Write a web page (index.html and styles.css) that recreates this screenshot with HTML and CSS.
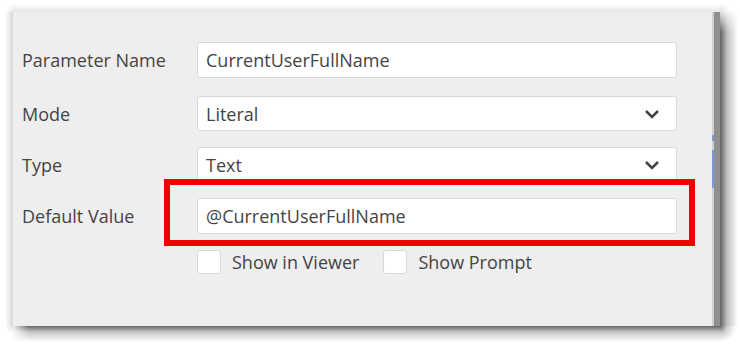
FILE: index.html
```html
<!DOCTYPE html>
<html lang="en">
<head>
    <meta charset="UTF-8">
    <meta name="viewport" content="width=device-width, initial-scale=1.0">
    <title>Parameter</title>
    <link rel="stylesheet" href="styles.css">
</head>
<body>
    <div id="frame">
        <div class="sh tl"></div>
        <div class="sh top"></div>
        <div class="sh tr"></div>
        <div class="sh left"></div>

        <div id="dialog">
            <div id="form">
                <div class="row first">
                    <label class="label">Parameter Name</label>
                    <div class="field">CurrentUserFullName</div>
                </div>
                <div class="row">
                    <label class="label">Mode</label>
                    <div class="field select">
                        <span>Literal</span>
                        <svg class="chevron" width="16" height="10" viewBox="0 0 16 10"><path d="M2 2 L8 8 L14 2" fill="none" stroke="#444" stroke-width="2.6"/></svg>
                    </div>
                </div>
                <div class="row">
                    <label class="label">Type</label>
                    <div class="field select">
                        <span>Text</span>
                        <svg class="chevron" width="16" height="10" viewBox="0 0 16 10"><path d="M2 2 L8 8 L14 2" fill="none" stroke="#444" stroke-width="2.6"/></svg>
                    </div>
                </div>
                <div class="row">
                    <label class="label">Default Value</label>
                    <div class="field-wrap">
                        <div class="field">@CurrentUserFullName</div>
                        <div class="highlight"></div>
                    </div>
                </div>
                <div class="checks">
                    <div class="check"><span class="box"></span>Show in Viewer</div>
                    <div class="check"><span class="box"></span>Show Prompt</div>
                </div>
            </div>
            <div id="edge">
                <span class="blue small"></span>
                <span class="blue"></span>
            </div>
        </div>

        <div class="sh right"></div>
        <div class="sh bl"></div>
        <div class="sh bottom"></div>
        <div class="sh br"></div>
    </div>
</body>
</html>
```

FILE: styles.css
```css
/* dialog screenshot */
body {
    margin: 0;
    background-color: white;
    font-family: "Open Sans", "Noto Sans", sans-serif;
    color: #444;
}

/* shadow drawn as gradient cells round the dialog */
#frame {
    display: grid;
    grid-template-columns: 8px 707px 18px;
    grid-template-rows: 8px 314px 16px;
    margin: 4px 0 0 5px;
}

.top {
    background: linear-gradient(to top, rgba(0, 0, 0, 0.10), rgba(0, 0, 0, 0));
}

.left {
    background: linear-gradient(to left, rgba(0, 0, 0, 0.16), rgba(0, 0, 0, 0));
}

.tl {
    background: radial-gradient(circle at bottom right, rgba(0, 0, 0, 0.08), rgba(0, 0, 0, 0) 8px);
}

.tr {
    background: radial-gradient(circle at bottom left, rgba(0, 0, 0, 0.12), rgba(0, 0, 0, 0) 10px);
}

.right {
    background:
        linear-gradient(to bottom, rgba(255, 255, 255, 0.8), rgba(255, 255, 255, 0) 20px),
        linear-gradient(to right, rgba(0, 0, 0, 0.62), rgba(0, 0, 0, 0.25) 7px, rgba(0, 0, 0, 0));
}

.bottom {
    background:
        linear-gradient(to right, rgba(255, 255, 255, 0.85), rgba(255, 255, 255, 0) 16px),
        linear-gradient(to bottom, rgba(0, 0, 0, 0.6), rgba(0, 0, 0, 0.22) 6px, rgba(0, 0, 0, 0));
}

.bl {
    background: radial-gradient(circle at top right, rgba(0, 0, 0, 0.12), rgba(0, 0, 0, 0) 8px);
}

.br {
    background: radial-gradient(circle at top left, rgba(0, 0, 0, 0.6), rgba(0, 0, 0, 0.2) 7px, rgba(0, 0, 0, 0) 16px);
}

#dialog {
    display: flex;
    background-color: #eeeeee;
}

#form {
    flex: 1;
    padding: 30px 35px 0 9px;
    display: flex;
    flex-direction: column;
    gap: 16px;
}

.row {
    display: flex;
    align-items: center;
}

.row.first {
    margin-bottom: 2px;
}

.label {
    width: 175px;
    font-size: 18px;
}

.field-wrap {
    flex: 1;
    position: relative;
}

.field {
    flex: 1;
    height: 36px;
    box-sizing: border-box;
    background-color: white;
    border: 1px solid #d8d8d8;
    border-radius: 3px;
    padding: 0 8px;
    font-size: 18px;
    display: flex;
    align-items: center;
    justify-content: space-between;
}

.select {
    height: 35px;
}

.chevron {
    margin-right: 8px;
}

.highlight {
    position: absolute;
    left: -33px;
    right: -18px;
    top: -19px;
    bottom: -12px;
    border: 6px solid #f20000;
}

.checks {
    display: flex;
    padding-left: 175px;
    gap: 24px;
}

.check {
    display: flex;
    align-items: center;
    font-size: 18px;
    gap: 11px;
}

.box {
    width: 24px;
    height: 24px;
    box-sizing: border-box;
    background-color: white;
    border: 1px solid #d8d8d8;
    border-radius: 3px;
}

#edge {
    width: 8px;
    background-color: #8f8f8f;
    border-left: 2px solid #d0d0d0;
    box-sizing: border-box;
    position: relative;
}

.blue {
    position: absolute;
    left: -2px;
    top: 138px;
    width: 2px;
    height: 38px;
    background-color: #7b9bd0;
}

.blue.small {
    top: 123px;
    height: 6px;
}
```
